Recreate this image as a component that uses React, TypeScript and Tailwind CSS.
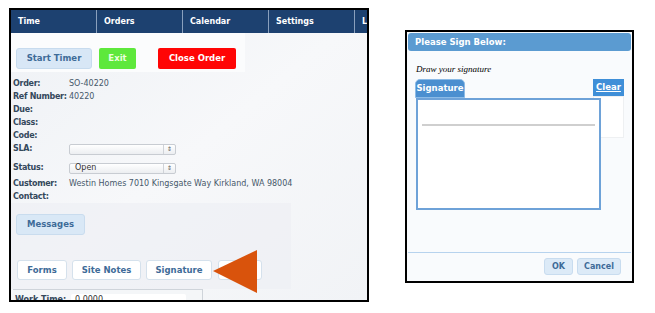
import React from "react";

const font = { fontFamily: '"DejaVu Sans", "Liberation Sans", sans-serif' };

function Field({ label, value, h }: { label: string; value?: React.ReactNode; h: string }) {
  return (
    <div className={`flex items-center ${h}`}>
      <div className="w-[56px] shrink-0 whitespace-nowrap text-[8px] font-bold tracking-[-0.3px] text-[#34485c]">{label}</div>
      <div className="whitespace-nowrap text-[8px] text-[#46586a]">{value}</div>
    </div>
  );
}

function Select({ value }: { value?: string }) {
  return (
    <div className="flex h-[11px] w-[107px] items-center justify-between rounded-[2px] border border-[#c8ccd2] bg-gradient-to-b from-white to-[#eceef1] pl-[5px] pr-[3px] text-[8px] text-[#333]">
      <span>{value}</span>
      <span className="flex h-full items-center border-l border-[#d0d3d8] pl-[3px] text-[6px] leading-none text-[#555]">⇕</span>
    </div>
  );
}

export default function App() {
  return (
    <div className="flex h-[313px] w-[655px] items-start bg-white" style={font}>
      {/* Left screenshot */}
      <div className="relative ml-[9px] mt-[8px] h-[294px] w-[360px] overflow-hidden border-2 border-black bg-gradient-to-br from-[#eef1f5] via-[#f7f8fa] to-[#f1f3f6]">
        <div className="flex h-[23px] bg-[#1d4170]">
          {["Time", "Orders", "Calendar", "Settings", "Logout"].map((t) => (
            <div key={t} className="flex w-[86px] shrink-0 items-center border-r border-[#8aa0bd] pl-[7px] text-[8px] font-bold text-white">
              {t}
            </div>
          ))}
        </div>
        <div className="flex h-[39px] w-[234px] items-end gap-[7px] bg-[#fbfcfd] pb-[3px] pl-[5px]">
          <div className="flex h-[21px] w-[76px] items-center justify-center rounded-[3px] border border-[#c7dbee] bg-[#d8e7f6] text-[8.5px] font-bold text-[#3e6b98]">Start Timer</div>
          <div className="flex h-[21px] w-[37px] items-center justify-center rounded-[2px] bg-[#5ee83c] text-[8.5px] font-bold text-[#eaffdf]">Exit</div>
          <div className="ml-[15px] flex h-[21px] w-[78px] items-center justify-center rounded-[2px] bg-[#ff0505] text-[8.5px] font-bold text-white">Close Order</div>
        </div>
        <div className="flex flex-col pl-[2px] pt-[5px]">
          <Field label="Order:" value="SO-40220" h="h-[13px]" />
          <Field label="Ref Number:" value="40220" h="h-[13px]" />
          <Field label="Due:" h="h-[13px]" />
          <Field label="Class:" h="h-[13px]" />
          <Field label="Code:" h="h-[13px]" />
          <Field label="SLA:" value={<Select />} h="h-[16px] mt-[-1px]" />
          <Field label="Status:" value={<Select value="Open" />} h="h-[16px] mt-[3px]" />
          <Field label="Customer:" value="Westin Homes 7010 Kingsgate Way Kirkland, WA 98004" h="h-[14px] mt-[1px]" />
          <Field label="Contact:" h="h-[12px]" />
        </div>
        <div className="h-[86px] w-[280px] bg-[#eceff3]/60 pl-[5px] pt-[11px]">
          <div className="flex h-[21px] w-[69px] items-center justify-center rounded-[3px] border border-[#c9dcee] bg-[#d9e8f6] text-[8.5px] font-bold text-[#3e6b98]">Messages</div>
          <div className="mt-[25px] flex gap-[5px] pl-[1px]">
            {[
              ["Forms", "w-[50px]"],
              ["Site Notes", "w-[69px]"],
              ["Signature", "w-[66px]"],
              ["", "w-[44px] ml-[1px]"],
            ].map(([t, w], i) => (
              <div key={i} className={`flex h-[20px] ${w} items-center justify-center rounded-[3px] border border-[#d5e1ec] bg-white text-[8.5px] font-bold text-[#3e6b98]`}>
                {t}
              </div>
            ))}
          </div>
        </div>
        <div className="ml-[2px] flex h-[14px] w-[190px] items-start border-r border-t border-[#cfd4da] bg-[#f4f6f8] pl-[2px] pt-[4px]">
          <span className="w-[56px] whitespace-nowrap text-[8px] font-bold text-[#34485c]">Work Time:</span>
          <span className="flex h-[12px] w-[115px] items-center rounded-[2px] bg-white pl-[4px] text-[8px] text-[#333]">0.0000</span>
        </div>
        <svg className="absolute left-[201px] top-[239px]" width="46" height="45" viewBox="0 0 46 45">
          <polygon points="1,22 45,1 45,44" fill="#d9530c" />
        </svg>
      </div>

      {/* Right dialog */}
      <div className="ml-[36px] mt-[30px] flex h-[253px] w-[229px] flex-col border-2 border-black bg-[#f9fbfd] p-[1px]">
        <div className="flex h-[18px] items-center rounded-[3px] bg-[#5b9bd1] pl-[7px] text-[8.5px] font-bold text-white">Please Sign Below:</div>
        <div className="flex-1 pl-[8px] pr-[6px]">
          <div className="mt-[12px] text-[9px] italic text-black" style={{ fontFamily: '"Liberation Serif", serif' }}>Draw your signature</div>
          <div className="mt-[2px] flex items-end justify-between">
            <div className="ml-[-1px] flex h-[19px] w-[50px] items-center justify-center rounded-t-[5px] border border-[#8cbbe6] bg-[#4b8fd0] text-[8.5px] font-bold text-white">Signature</div>
            <div className="mb-[2px] mr-[1px] flex h-[17px] w-[31px] items-center justify-center bg-[#3f8fd8] text-[8.5px] font-bold text-white underline">Clear</div>
          </div>
          <div className="flex">
            <div className="relative h-[112px] w-[185px] shrink-0 border-2 border-[#6ea2d8] bg-white">
              <div className="absolute left-[4px] top-[24px] h-[2px] w-[173px] bg-[#cfcfcf]" />
            </div>
            <div className="ml-[-8px] mt-[-2px] h-[42px] w-[31px] shrink-0 border border-[#eef0f2] bg-white" />
          </div>
        </div>
        <div className="flex h-[28px] items-center justify-end gap-[4px] border-t border-[#b7d3ee] pr-[10px]">
          <div className="flex h-[17px] w-[29px] items-center justify-center rounded-[3px] border border-[#c8dcef] bg-[#dceaf7] text-[8px] font-bold text-[#3e6b98]">OK</div>
          <div className="flex h-[17px] w-[44px] items-center justify-center rounded-[3px] border border-[#c8dcef] bg-[#dceaf7] text-[8px] font-bold text-[#3e6b98]">Cancel</div>
        </div>
      </div>
    </div>
  );
}
